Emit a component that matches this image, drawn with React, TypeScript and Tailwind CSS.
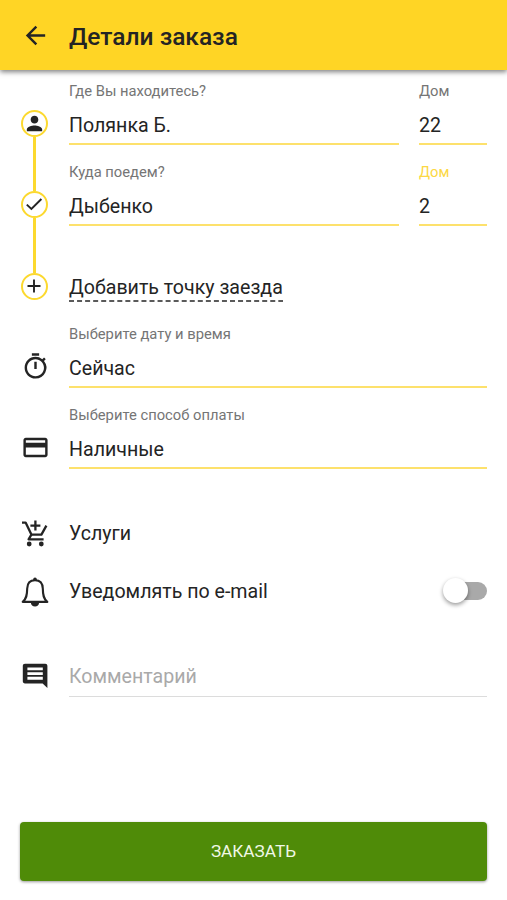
import React from 'react';
import { MdArrowBack, MdCreditCard, MdOutlineTimer, MdPerson } from 'react-icons/md';

type FieldProps = {
  label: string;
  value: string;
  className?: string;
  labelClassName?: string;
};

const Field: React.FC<FieldProps> = ({ label, value, className = '', labelClassName = 'text-[#757575]' }) => (
  <div className={`h-[81px] pt-3 ${className}`}>
    <div className={`text-[14.75px] leading-[18px] ${labelClassName}`}>{label}</div>
    <div className="h-[43px] pt-[14px] text-[19.6px] leading-6">{value}</div>
    <div className="h-[2px] bg-[#fde16c]" />
  </div>
);

const Stop: React.FC<{ children: React.ReactNode }> = ({ children }) => (
  <div className="flex h-[27px] w-[27px] shrink-0 items-center justify-center rounded-full border-[2.5px] border-[#fcd92f]">
    {children}
  </div>
);

const CartIcon = () => (
  <svg className="h-[28px] w-[28px]" viewBox="0 0 28 28" fill="none" stroke="currentColor" strokeWidth="2.3">
    <path d="M1 3.6H4.6L10.4 15.6H20.4L25.4 6.6" strokeLinejoin="round" />
    <path d="M10.4 15.6L7.6 20.3H22.6" strokeLinejoin="round" />
    <path d="M14.4 1.6V11.6M9.4 6.6H19.4" />
    <circle cx="8.2" cy="25" r="2.4" fill="currentColor" stroke="none" />
    <circle cx="20.3" cy="25" r="2.4" fill="currentColor" stroke="none" />
  </svg>
);

const BellIcon = () => (
  <svg className="h-[30px] w-[28px]" viewBox="0 0 28 30" fill="none">
    <path
      d="M14 3.2C8.8 3.2 6.3 6.8 6.2 11.5C6.1 18.5 5.4 22 1.7 24.9H26.3C22.6 22 21.9 18.5 21.8 11.5C21.7 6.8 19.2 3.2 14 3.2Z"
      stroke="currentColor"
      strokeWidth="2.1"
      strokeLinejoin="round"
    />
    <circle cx="14" cy="2.2" r="1.8" fill="currentColor" />
    <path d="M9.8 25.4H18.2C18 27.9 16.3 29.5 14 29.5S10 27.9 9.8 25.4Z" fill="currentColor" />
  </svg>
);

const CommentIcon = () => (
  <svg className="h-[26px] w-[26px]" viewBox="0 0 26 26">
    <path d="M3 0.8H23.2C24.5 0.8 25.4 1.7 25.4 3V25L20.6 20.5H3C1.7 20.5 0.8 19.6 0.8 18.3V3C0.8 1.7 1.7 0.8 3 0.8Z" fill="currentColor" />
    <path d="M5.4 5.9H20.8M5.4 10.6H20.8M5.4 15.3H20.8" stroke="white" strokeWidth="2.9" />
  </svg>
);

const App: React.FC = () => {
  return (
    <div className="flex h-[900px] w-[507px] flex-col overflow-hidden bg-white font-[Roboto,sans-serif] text-[#242424]">
      {/* Header */}
      <header className="z-10 flex h-[70px] shrink-0 items-center bg-[#ffd525] pl-[21px] shadow-[0_2px_5px_rgba(0,0,0,0.5)]">
        <MdArrowBack className="h-[29px] w-[29px]" />
        <h1 className="pt-[5px] pl-[19px] text-[24.5px] font-medium">Детали заказа</h1>
      </header>

      {/* Route */}
      <section className="flex h-[243px] shrink-0 pr-5 pl-5">
        <div className="flex w-[49px] flex-col items-start pt-[39.5px] pl-[0.5px]">
          <Stop>
            <MdPerson className="h-[23px] w-[23px] shrink-0" />
          </Stop>
          <div className="ml-[12px] h-[54px] w-[3px] bg-[#fcd92f]" />
          <Stop>
            <svg className="h-[18px] w-[18px] shrink-0" viewBox="0 0 18 18" fill="none" stroke="currentColor" strokeWidth="1.9">
              <path d="M1.8 9.6L6.4 14L16.4 4" />
            </svg>
          </Stop>
          <div className="ml-[12px] h-[55px] w-[3px] bg-[#fcd92f]" />
          <Stop>
            <svg className="h-[14px] w-[14px] shrink-0" viewBox="0 0 14 14" fill="none" stroke="currentColor" strokeWidth="1.9">
              <path d="M7 0.5V13.5M0.5 7H13.5" />
            </svg>
          </Stop>
        </div>
        <div className="flex-1">
          <div className="flex gap-5">
            <Field label="Где Вы находитесь?" value="Полянка Б." className="flex-1" />
            <Field label="Дом" value="22" className="w-[68px]" />
          </div>
          <div className="flex gap-5">
            <Field label="Куда поедем?" value="Дыбенко" className="flex-1" />
            <Field label="Дом" value="2" className="w-[68px]" labelClassName="text-[#fcd844]" />
          </div>
          <div className="flex pt-[44px]">
            <div>
              <div className="text-[19.6px] leading-6">Добавить точку заезда</div>
              <svg className="h-[2px] w-[214px]" stroke="currentColor" strokeWidth="1.6">
                <line x1="0" y1="1" x2="214" y2="1" strokeDasharray="5 3.05" />
              </svg>
            </div>
          </div>
        </div>
      </section>

      {/* Time and payment */}
      <section className="shrink-0 px-5">
        <div className="flex">
          <MdOutlineTimer className="mt-[38.5px] mr-[19.5px] ml-[0.5px] h-[29px] w-[29px]" />
          <Field label="Выберите дату и время" value="Сейчас" className="flex-1" />
        </div>
        <div className="flex">
          <MdCreditCard className="mt-[38.5px] mr-[19.5px] ml-[0.5px] h-[29px] w-[29px]" />
          <Field label="Выберите способ оплаты" value="Наличные" className="flex-1" />
        </div>
      </section>

      {/* Options */}
      <section className="shrink-0 px-5 pt-[28px] text-[19.6px]">
        <div className="flex h-[59px] items-center">
          <div className="w-[49px] pl-px">
            <CartIcon />
          </div>
          <span className="pt-[2px]">Услуги</span>
        </div>
        <div className="flex h-[59px] items-center">
          <div className="w-[49px] pl-px">
            <BellIcon />
          </div>
          <span className="pt-px">Уведомлять по e-mail</span>
          <div className="mb-[2px] ml-auto flex h-[18px] w-[42px] items-center rounded-full bg-[#a9a9a9]">
            <div className="-ml-[2px] h-[25px] w-[25px] rounded-full bg-white shadow-[0_2px_4px_rgba(0,0,0,0.4)]" />
          </div>
        </div>
        <div className="flex pt-[40px]">
          <div className="w-[49px] pt-[2px] pl-[2px]">
            <CommentIcon />
          </div>
          <div className="h-[36px] flex-1 border-b border-[#dcdcdc] pt-[4px] leading-6 text-[#a9a9a9]">Комментарий</div>
        </div>
      </section>

      <button className="mx-5 mt-auto mb-[19px] h-[59px] shrink-0 rounded-[4px] bg-[#4f8b08] text-[17.2px] text-[#f0f8e6] shadow-[0_1px_3px_rgba(0,0,0,0.4)]">
        ЗАКАЗАТЬ
      </button>
    </div>
  );
};

export default App;
